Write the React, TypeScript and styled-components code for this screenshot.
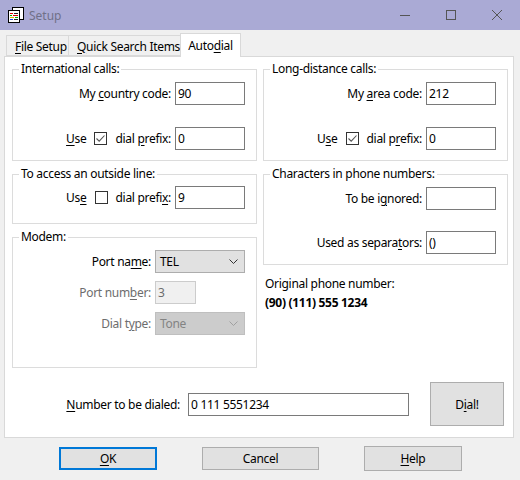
import React from "react";
import styled, { createGlobalStyle } from "styled-components";

const Global = createGlobalStyle`
  html, body { margin: 0; padding: 0; background: #f0f0f0; }
  body { font-family: "Noto Sans", "Segoe UI", sans-serif; font-size: 12px; letter-spacing: -0.3px; color: #000; }
  input { letter-spacing: -0.3px; }
  * { box-sizing: border-box; }
`;

const Window = styled.div`
  width: 520px;
  height: 480px;
  background: #f0f0f0;
  display: flex;
  flex-direction: column;
  overflow: hidden;
`;

const TitleBar = styled.div`
  height: 30px;
  flex-shrink: 0;
  background: #aaaad5;
  display: flex;
  align-items: center;
`;

const IconWrap = styled.div`
  width: 16px;
  height: 16px;
  margin-left: 8px;
  display: flex;
`;

const TitleText = styled.span`
  margin-left: 5px;
  flex: 1;
  color: #707088;
  font-size: 12px;
  letter-spacing: 0;
`;

const WinButton = styled.div`
  width: 46px;
  height: 30px;
  display: flex;
  align-items: center;
  justify-content: center;
`;

const Body = styled.div`
  padding: 0 6px 0 4px;
  display: flex;
  flex-direction: column;
`;

const TabStrip = styled.div`
  height: 26px;
  display: flex;
  align-items: flex-end;
  padding-left: 2px;
  position: relative;
  z-index: 1;
`;

const Tab = styled.div<{ $w: number; $active?: boolean }>`
  width: ${(p) => p.$w}px;
  height: ${(p) => (p.$active ? 24 : 21)}px;
  margin-left: -1px;
  margin-bottom: ${(p) => (p.$active ? -1 : 0)}px;
  border: 1px solid #d9d9d9;
  border-bottom: ${(p) => (p.$active ? "none" : "1px solid #d9d9d9")};
  background: ${(p) => (p.$active ? "#fff" : "#f0f0f0")};
  display: flex;
  align-items: center;
  justify-content: ${(p) => (p.$active ? "center" : "flex-start")};
  padding-left: ${(p) => (p.$active ? 0 : 8)}px;
  padding-top: ${(p) => (p.$active ? 0 : 1)}px;
  white-space: nowrap;
  &:first-child { margin-left: 0; }
`;

const Panel = styled.div`
  height: 382px;
  background: #fff;
  border: 1px solid #d9d9d9;
  padding: 4px 5px 0 7px;
  display: flex;
  flex-direction: column;
`;

const Columns = styled.div`
  display: grid;
  grid-template-columns: 245px 245px;
  column-gap: 6px;
  align-items: start;
`;

const Column = styled.div`
  display: flex;
  flex-direction: column;
  gap: 5px;
`;

const Group = styled.fieldset`
  margin: 0;
  padding: 0;
  min-width: 0;
  border: 1px solid #dcdcdc;
`;

const Legend = styled.legend`
  margin-left: 6px;
  padding: 0 2px;
  line-height: 16px;
  height: 16px;
`;

const GroupBody = styled.div<{ $pt: number; $pb: number; $gap: number }>`
  display: flex;
  flex-direction: column;
  gap: ${(p) => p.$gap}px;
  padding: ${(p) => p.$pt}px 11px ${(p) => p.$pb}px 0;
`;

const FieldRow = styled.div`
  display: flex;
  justify-content: flex-end;
  align-items: center;
  height: 23px;
`;

const Label = styled.span<{ $gap?: number; $disabled?: boolean }>`
  margin-right: ${(p) => p.$gap ?? 4}px;
  white-space: nowrap;
  color: ${(p) => (p.$disabled ? "#6d6d6d" : "#000")};
`;

const Key = styled.span`
  text-decoration: underline;
  text-underline-offset: 2px;
`;

const TextBox = styled.input<{ $w: number }>`
  width: ${(p) => p.$w}px;
  height: 23px;
  border: 1px solid #7a7a7a;
  background: #fff;
  font: inherit;
  color: #000;
  padding: 0 2px;
  margin: 0;
  outline: none;
  &:disabled {
    border-color: #cccccc;
    background: #f0f0f0;
    color: #6d6d6d;
  }
`;

const CheckBox = styled.div`
  width: 13px;
  height: 13px;
  border: 1px solid #333;
  background: #fff;
  margin-right: 8px;
  display: flex;
`;

const ModemGrid = styled.div`
  display: grid;
  grid-template-columns: 1fr 90px;
  column-gap: 4px;
  row-gap: 8px;
  align-items: center;
  padding: 5px 11px 32px 0;
`;

const GridLabel = styled.span<{ $disabled?: boolean }>`
  justify-self: end;
  white-space: nowrap;
  color: ${(p) => (p.$disabled ? "#6d6d6d" : "#000")};
`;

const Combo = styled.div<{ $disabled?: boolean }>`
  height: 23px;
  width: 90px;
  border: 1px solid ${(p) => (p.$disabled ? "#bfbfbf" : "#adadad")};
  background: ${(p) => (p.$disabled ? "#cccccc" : "#e1e1e1")};
  color: ${(p) => (p.$disabled ? "#838383" : "#000")};
  display: flex;
  align-items: center;
  justify-content: space-between;
  padding: 0 6px 0 4px;
`;

const InfoText = styled.div<{ $bold?: boolean; $mt: number }>`
  margin: ${(p) => p.$mt}px 0 0 2px;
  line-height: 16px;
  font-weight: ${(p) => (p.$bold ? 700 : 400)};
`;

const DialRow = styled.div`
  display: flex;
  align-items: center;
  justify-content: flex-end;
  margin-top: 14px;
  padding-right: 4px;
`;

const DialLabel = styled.span`
  margin-right: 8px;
`;

const PushButton = styled.div<{ $w: number; $h?: number; $default?: boolean }>`
  width: ${(p) => p.$w}px;
  height: ${(p) => p.$h ?? 23}px;
  background: #e1e1e1;
  border: ${(p) => (p.$default ? "2px solid #0078d7" : "1px solid #adadad")};
  display: flex;
  align-items: center;
  justify-content: center;
  white-space: nowrap;
`;

const DialButton = styled(PushButton)`
  margin-left: 21px;
`;

const ButtonRow = styled.div`
  display: flex;
  align-items: center;
  height: 25px;
  margin-top: 8px;
  padding-left: 55px;
  gap: 45px;
`;

const Chevron = ({ color }: { color: string }) => (
  <svg width="9" height="5" viewBox="0 0 9 5">
    <path d="M0.5 0.5 L4.5 4.5 L8.5 0.5" fill="none" stroke={color} strokeWidth="1" />
  </svg>
);

const Check = ({ checked }: { checked: boolean }) => (
  <CheckBox>
    {checked && (
      <svg width="11" height="11" viewBox="0 0 11 11">
        <path d="M1.5 5.5 L4.2 8.2 L9.5 2.5" fill="none" stroke="#555" strokeWidth="1.1" />
      </svg>
    )}
  </CheckBox>
);

const AppIcon = () => (
  <IconWrap>
    <svg width="16" height="16" viewBox="0 0 16 16" shapeRendering="crispEdges">
      <rect x="4.5" y="0.5" width="11" height="12" fill="#fff" stroke="#000" />
      <rect x="0.5" y="3.5" width="11" height="12" fill="#fff" stroke="#000" />
      <rect x="2" y="6" width="3" height="1" fill="#d00" />
      <rect x="6" y="6" width="4" height="1" fill="#222" />
      <rect x="2" y="8" width="2" height="1" fill="#0a0" />
      <rect x="5" y="8" width="5" height="1" fill="#d00" />
      <rect x="2" y="10" width="4" height="1" fill="#e0b000" />
      <rect x="7" y="10" width="3" height="1" fill="#0a0" />
      <rect x="2" y="12" width="3" height="1" fill="#1040e0" />
      <rect x="6" y="12" width="4" height="1" fill="#222" />
    </svg>
  </IconWrap>
);

const WinIcons = {
  min: (
    <svg width="10" height="10" viewBox="0 0 10 10">
      <path d="M0 5.5 H10" stroke="#555" strokeWidth="1" />
    </svg>
  ),
  max: (
    <svg width="10" height="10" viewBox="0 0 10 10">
      <rect x="0.5" y="0.5" width="9" height="9" fill="none" stroke="#555" strokeWidth="1" />
    </svg>
  ),
  close: (
    <svg width="10" height="10" viewBox="0 0 10 10">
      <path d="M0 0 L10 10 M10 0 L0 10" stroke="#555" strokeWidth="1" />
    </svg>
  ),
};

export default function App() {
  return (
    <Window>
      <Global />
      <TitleBar>
        <AppIcon />
        <TitleText>Setup</TitleText>
        <WinButton>{WinIcons.min}</WinButton>
        <WinButton>{WinIcons.max}</WinButton>
        <WinButton>{WinIcons.close}</WinButton>
      </TitleBar>
      <Body>
        <TabStrip>
          <Tab $w={63}>
            <span><Key>F</Key>ile Setup</span>
          </Tab>
          <Tab $w={113}>
            <span><Key>Q</Key>uick Search Items</span>
          </Tab>
          <Tab $w={61} $active>
            <span>Auto<Key>d</Key>ial</span>
          </Tab>
        </TabStrip>
        <Panel>
          <Columns>
            <Column>
              <Group>
                <Legend>International calls:</Legend>
                <GroupBody $pt={5} $pb={10} $gap={22}>
                  <FieldRow>
                    <Label>My <Key>c</Key>ountry code:</Label>
                    <TextBox $w={70} defaultValue="90" />
                  </FieldRow>
                  <FieldRow>
                    <Label $gap={8}><Key>U</Key>se</Label>
                    <Check checked />
                    <Label>dial <Key>p</Key>refix:</Label>
                    <TextBox $w={70} defaultValue="0" />
                  </FieldRow>
                </GroupBody>
              </Group>
              <Group>
                <Legend>To access an outside line:</Legend>
                <GroupBody $pt={4} $pb={14} $gap={0}>
                  <FieldRow>
                    <Label $gap={8}>Us<Key>e</Key></Label>
                    <Check checked={false} />
                    <Label>dial prefi<Key>x</Key>:</Label>
                    <TextBox $w={70} defaultValue="9" />
                  </FieldRow>
                </GroupBody>
              </Group>
              <Group>
                <Legend>Modem:</Legend>
                <ModemGrid>
                  <GridLabel>Port na<Key>m</Key>e:</GridLabel>
                  <Combo>
                    <span>TEL</span>
                    <Chevron color="#333" />
                  </Combo>
                  <GridLabel $disabled>Port num<Key>b</Key>er:</GridLabel>
                  <TextBox $w={41} defaultValue="3" disabled />
                  <GridLabel $disabled>Dial t<Key>y</Key>pe:</GridLabel>
                  <Combo $disabled>
                    <span>Tone</span>
                    <Chevron color="#a0a0a0" />
                  </Combo>
                </ModemGrid>
              </Group>
            </Column>
            <Column>
              <Group>
                <Legend>Long-distance calls:</Legend>
                <GroupBody $pt={5} $pb={10} $gap={22}>
                  <FieldRow>
                    <Label>My <Key>a</Key>rea code:</Label>
                    <TextBox $w={70} defaultValue="212" />
                  </FieldRow>
                  <FieldRow>
                    <Label $gap={8}>U<Key>s</Key>e</Label>
                    <Check checked />
                    <Label>dial p<Key>r</Key>efix:</Label>
                    <TextBox $w={70} defaultValue="0" />
                  </FieldRow>
                </GroupBody>
              </Group>
              <Group>
                <Legend>Characters in phone numbers:</Legend>
                <GroupBody $pt={5} $pb={10} $gap={21}>
                  <FieldRow>
                    <Label>To be i<Key>g</Key>nored:</Label>
                    <TextBox $w={70} defaultValue="" />
                  </FieldRow>
                  <FieldRow>
                    <Label>Used as separa<Key>t</Key>ors:</Label>
                    <TextBox $w={70} defaultValue="()" />
                  </FieldRow>
                </GroupBody>
              </Group>
              <div>
                <InfoText $mt={6}>Original phone number:</InfoText>
                <InfoText $mt={3} $bold>(90) (111) 555 1234</InfoText>
              </div>
            </Column>
          </Columns>
          <DialRow>
            <DialLabel><Key>N</Key>umber to be dialed:</DialLabel>
            <TextBox $w={221} defaultValue="0 111 5551234" />
            <DialButton $w={74} $h={44}>
              <span>D<Key>i</Key>al!</span>
            </DialButton>
          </DialRow>
        </Panel>
        <ButtonRow>
          <PushButton $w={98} $default>
            <span><Key>O</Key>K</span>
          </PushButton>
          <PushButton $w={117}>Cancel</PushButton>
          <PushButton $w={98} $h={25}>
            <span><Key>H</Key>elp</span>
          </PushButton>
        </ButtonRow>
      </Body>
    </Window>
  );
}
